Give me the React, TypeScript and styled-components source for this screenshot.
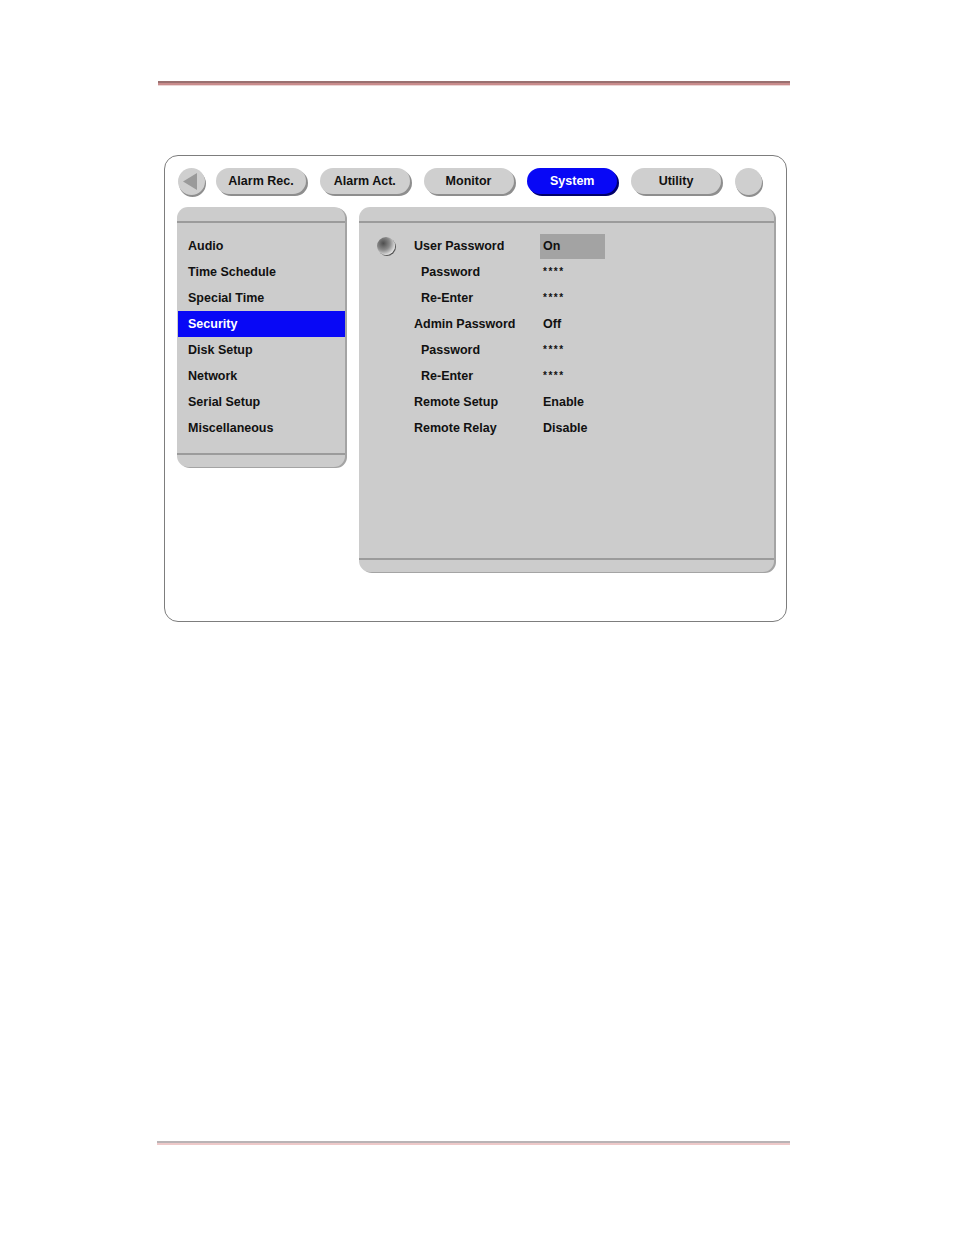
import styled, { createGlobalStyle } from 'styled-components';

type Setting = {
  label: string;
  value: string;
  sub?: boolean;
  active?: boolean;
};

const tabs = ['Alarm Rec.', 'Alarm Act.', 'Monitor', 'System', 'Utility'];

const menu = [
  'Audio',
  'Time Schedule',
  'Special Time',
  'Security',
  'Disk Setup',
  'Network',
  'Serial Setup',
  'Miscellaneous',
];

const settings: Setting[] = [
  { label: 'User Password', value: 'On', active: true },
  { label: 'Password', value: '****', sub: true },
  { label: 'Re-Enter', value: '****', sub: true },
  { label: 'Admin Password', value: 'Off' },
  { label: 'Password', value: '****', sub: true },
  { label: 'Re-Enter', value: '****', sub: true },
  { label: 'Remote Setup', value: 'Enable' },
  { label: 'Remote Relay', value: 'Disable' },
];

const GlobalStyle = createGlobalStyle`
  body {
    margin: 0;
    background: #fff;
    font-family: "Liberation Sans", Arial, sans-serif;
  }
`;

export default function App() {
  return (
    <>
      <GlobalStyle />
      <SPage>
        <STopRule />
        <SFrame>
          <STabBar>
            <SRound>
              <svg width="27" height="27" viewBox="0 0 27 27">
                <polygon points="5,13.5 19,5 19,22" fill="#9a9a9a" />
              </svg>
            </SRound>
            {tabs.map((t) => (
              <STab key={t} $active={t === 'System'}>
                {t}
              </STab>
            ))}
            <SRound />
          </STabBar>
          <SPanels>
            <SSidePanel>
              <SMenu>
                {menu.map((m) => (
                  <SMenuItem key={m} $selected={m === 'Security'}>
                    {m}
                  </SMenuItem>
                ))}
              </SMenu>
            </SSidePanel>
            <SMainPanel>
              <SSettings>
                {settings.map((s, i) => (
                  <SRow key={i}>
                    <SBulletCell>{s.active && <SBullet />}</SBulletCell>
                    <SLabel $sub={s.sub}>{s.label}</SLabel>
                    <SValue $active={s.active} $masked={s.value === '****'}>
                      {s.value}
                    </SValue>
                  </SRow>
                ))}
              </SSettings>
            </SMainPanel>
          </SPanels>
        </SFrame>
        <SBottomRule />
      </SPage>
    </>
  );
}

const SPage = styled.div`
  width: 954px;
  padding-top: 81px;
`;

const STopRule = styled.div`
  margin-left: 158px;
  width: 632px;
  height: 5px;
  background: linear-gradient(#9a7070 0, #9a7070 40%, #c98c8c 40%, #c98c8c 80%, #ecd6d6 80%);
`;

const SBottomRule = styled.div`
  margin-left: 157px;
  margin-top: 519px;
  width: 633px;
  height: 4px;
  background: linear-gradient(#b9b3b5 0, #b9b3b5 50%, #eec9c9 50%);
`;

const SFrame = styled.div`
  box-sizing: border-box;
  margin: 69px 0 0 164px;
  width: 623px;
  height: 467px;
  border: 1px solid #7d7d7d;
  border-radius: 14px;
`;

const STabBar = styled.div`
  display: flex;
  align-items: flex-start;
  padding: 12px 0 0 13px;
  height: 28px;
`;

const SRound = styled.div`
  width: 27px;
  height: 27px;
  margin-right: 11px;
  border-radius: 50%;
  background: #cfcfcf;
  box-shadow: 1px 2px 0 #8e8e8e;
  &:last-child {
    margin-right: 0;
  }
`;

const STab = styled.div<{ $active?: boolean }>`
  width: 90px;
  height: 26px;
  margin-right: 13.75px;
  border-radius: 14px;
  display: flex;
  align-items: center;
  justify-content: center;
  font-size: 12.5px;
  font-weight: bold;
  color: ${(p) => (p.$active ? '#fff' : '#111')};
  background: ${(p) => (p.$active ? '#0808f6' : '#cfcfcf')};
  box-shadow: 2px 2px 0 ${(p) => (p.$active ? '#00006a' : '#8e8e8e')};
`;

const SPanels = styled.div`
  display: flex;
  align-items: flex-start;
  gap: 14px;
  padding: 11px 0 0 12px;
`;

const SPanel = styled.div`
  box-sizing: border-box;
  background: #cccccc;
  border-radius: 11px;
  box-shadow: 2px 1px 0 #a4a4a4;
  padding: 14px 0 12px;
  display: flex;
  flex-direction: column;
`;

const SSidePanel = styled(SPanel)`
  width: 168px;
  height: 260px;
`;

const SMainPanel = styled(SPanel)`
  width: 415px;
  height: 365px;
`;

const SMenu = styled.div`
  flex: 1;
  border-top: 2px solid #9b9b9b;
  border-bottom: 2px solid #9b9b9b;
  padding: 10px 0 0;
`;

const SMenuItem = styled.div<{ $selected?: boolean }>`
  height: 26px;
  margin: 0 0 0 1px;
  padding-left: 10px;
  display: flex;
  align-items: center;
  font-size: 12.5px;
  font-weight: bold;
  color: ${(p) => (p.$selected ? '#fff' : '#111')};
  background: ${(p) => (p.$selected ? '#0808f6' : 'transparent')};
`;

const SSettings = styled.div`
  flex: 1;
  border-top: 2px solid #9b9b9b;
  border-bottom: 2px solid #9b9b9b;
  padding-top: 10px;
`;

const SRow = styled.div`
  display: grid;
  grid-template-columns: 55px 126px 65px;
  height: 26px;
  align-items: center;
`;

const SBulletCell = styled.div`
  padding-left: 18px;
  display: flex;
  align-items: center;
`;

const SBullet = styled.div`
  width: 18px;
  height: 18px;
  border-radius: 50%;
  background: radial-gradient(circle at 35% 35%, #4e4e4e 0, #8a8a8a 40%, #e4e4e4 75%);
  box-shadow: 1px 1px 0 #5a5a5a;
`;

const SLabel = styled.div<{ $sub?: boolean }>`
  padding-left: ${(p) => (p.$sub ? '7px' : '0')};
  font-size: 12.5px;
  font-weight: bold;
  color: #111;
`;

const SValue = styled.div<{ $active?: boolean; $masked?: boolean }>`
  height: 25px;
  display: flex;
  align-items: ${(p) => (p.$masked ? 'flex-start' : 'center')};
  padding: ${(p) => (p.$masked ? '6px 0 0 3px' : '0 0 0 3px')};
  box-sizing: border-box;
  font-size: ${(p) => (p.$masked ? '10px' : '12.5px')};
  letter-spacing: ${(p) => (p.$masked ? '1.5px' : '0')};
  font-weight: bold;
  color: #111;
  background: ${(p) => (p.$active ? '#a3a3a3' : 'transparent')};
`;
